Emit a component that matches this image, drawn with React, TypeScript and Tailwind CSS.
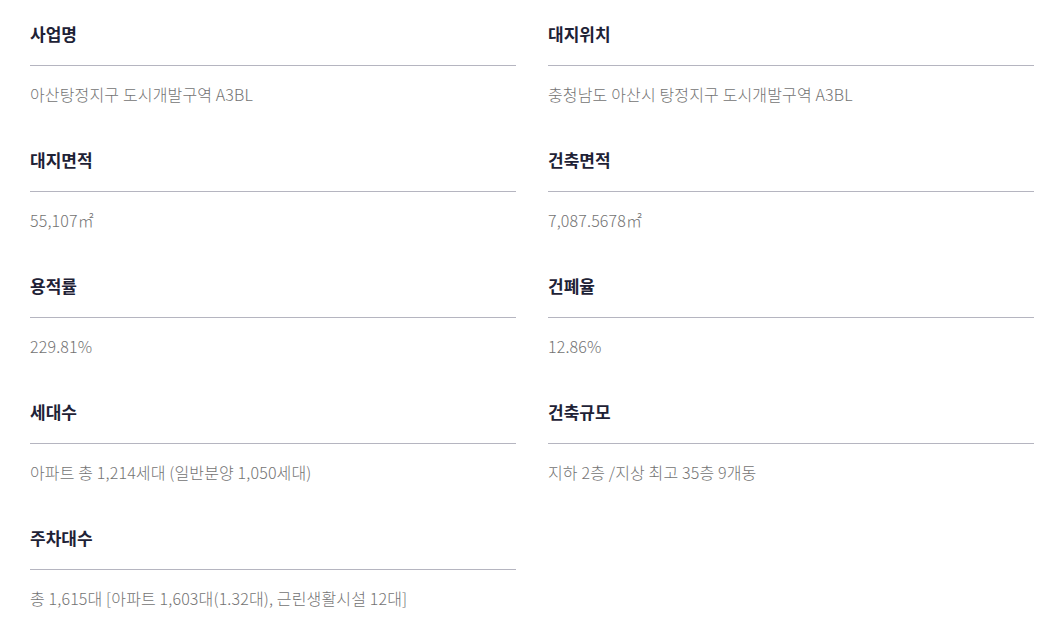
import React from "react";

const items: [string, string][] = [
  ["사업명", "아산탕정지구 도시개발구역 A3BL"],
  ["대지위치", "충청남도 아산시 탕정지구 도시개발구역 A3BL"],
  ["대지면적", "55,107㎡"],
  ["건축면적", "7,087.5678㎡"],
  ["용적률", "229.81%"],
  ["건폐율", "12.86%"],
  ["세대수", "아파트 총 1,214세대 (일반분양 1,050세대)"],
  ["건축규모", "지하 2층 /지상 최고 35층 9개동"],
  ["주차대수", "총 1,615대 [아파트 1,603대(1.32대), 근린생활시설 12대]"],
];

export default function App() {
  return (
    <div
      className="w-[1047px] h-[632px] bg-white pl-[30px] pr-[13px] pt-[22px]"
      style={{ fontFamily: '"Noto Sans CJK KR", "Noto Sans", sans-serif' }}
    >
      <div className="grid grid-cols-2 gap-x-8 gap-y-[42px]">
        {items.map(([t, v]) => (
          <div key={t}>
            <div className="text-[17px] leading-[24px] font-bold text-[#1e2236] pb-[19px] border-b border-[#b5b5c0]">
              {t}
            </div>
            <div className="pt-[16px] text-[16px] leading-[24px] font-light tracking-[0.15px] text-[#737373]">
              {v}
            </div>
          </div>
        ))}
      </div>
    </div>
  );
}
